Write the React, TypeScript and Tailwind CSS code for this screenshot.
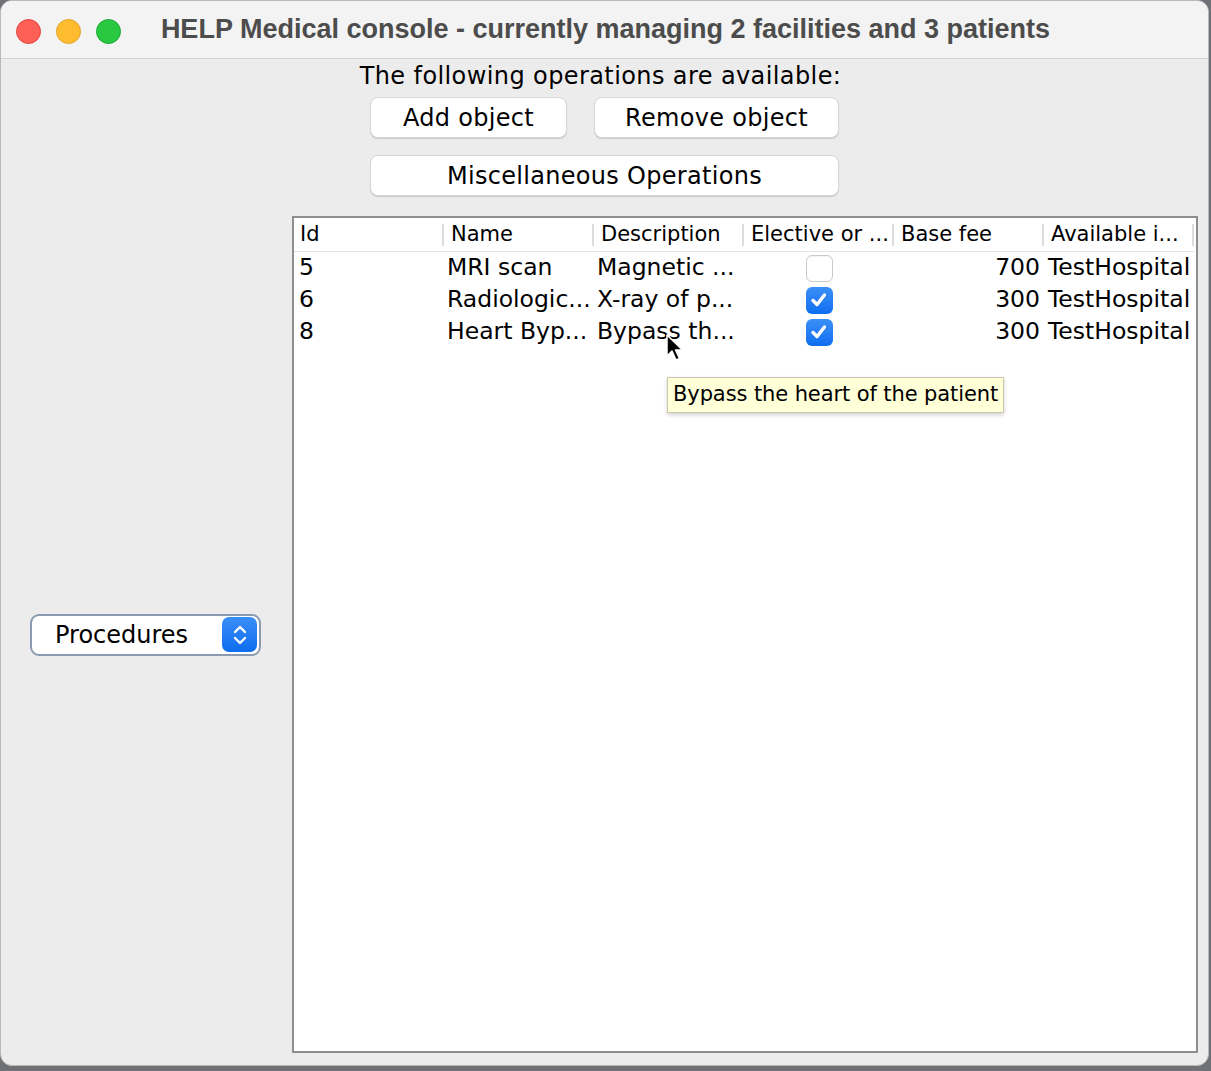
import { useState } from 'react';

type Row = { id: number; name: string; desc: string; elective: boolean; fee: number; place: string };

const rows: Row[] = [
  { id: 5, name: 'MRI scan', desc: 'Magnetic ...', elective: false, fee: 700, place: 'TestHospital' },
  { id: 6, name: 'Radiologic...', desc: 'X-ray of p...', elective: true, fee: 300, place: 'TestHospital' },
  { id: 8, name: 'Heart Byp...', desc: 'Bypass th...', elective: true, fee: 300, place: 'TestHospital' },
];

const columns = ['Id', 'Name', 'Description', 'Elective or ...', 'Base fee', 'Available i...'];

function CheckBox({ checked }: { checked: boolean }) {
  if (!checked) {
    return <div className="w-[27px] h-[27px] rounded-[6px] border border-[#c9c9c9] bg-white shadow-[inset_0_1px_1px_rgba(0,0,0,0.05)]" />;
  }
  return (
    <div className="w-[27px] h-[27px] rounded-[6px] bg-gradient-to-b from-[#3b8ff7] to-[#0c6ef0] flex items-center justify-center">
      <svg width="20" height="20" viewBox="0 0 20 20">
        <path d="M4 10.5 L8 14.5 L15.5 5" fill="none" stroke="white" strokeWidth="3.4" strokeLinecap="round" strokeLinejoin="round" />
      </svg>
    </div>
  );
}

function MacButton({ label, className }: { label: string; className: string }) {
  return (
    <button className={`h-[41px] rounded-[8px] bg-white border border-[#d6d6d6] shadow-[0_1px_1px_rgba(0,0,0,0.15)] text-[24px] tracking-[0.3px] text-black ${className}`}>
      {label}
    </button>
  );
}

export default function App() {
  const [kind] = useState('Procedures');

  return (
    <div className="w-[1211px] h-[1071px] bg-[#6f7176] font-['DejaVu_Sans',sans-serif]">
      <div className="relative w-[1209px] h-[1066px] rounded-[12px] overflow-hidden border border-[#b9b9b9] bg-[#ececec] flex flex-col">
        {/* title bar */}
        <div className="relative h-[58px] shrink-0 bg-[#f3f3f3] border-b border-[#d2d2d2] flex items-center justify-center">
          <div className="absolute left-[15px] top-[18px] flex gap-[15px]">
            <span className="w-[25px] h-[25px] rounded-full bg-[#fe5f57] border border-[#e2463f]" />
            <span className="w-[25px] h-[25px] rounded-full bg-[#febc2e] border border-[#e0a028]" />
            <span className="w-[25px] h-[25px] rounded-full bg-[#28c840] border border-[#1fa833]" />
          </div>
          <span className="font-['Liberation_Sans',sans-serif] font-bold text-[27px] text-[#4c4c4c] pl-[2px]">
            HELP Medical console - currently managing 2 facilities and 3 patients
          </span>
        </div>

        {/* operations */}
        <div className="flex flex-col items-center pt-[1px]">
          <div className="text-[24px] tracking-[0.4px] text-black leading-[32px] -ml-[8px]">The following operations are available:</div>
          <div className="flex gap-[27px] mt-[5px]">
            <MacButton label="Add object" className="w-[197px]" />
            <MacButton label="Remove object" className="w-[245px]" />
          </div>
          <MacButton label="Miscellaneous Operations" className="w-[469px] mt-[17px]" />
        </div>

        {/* main area */}
        <div className="flex flex-1 mt-[20px] pb-[12px] pr-[10px]">
          <div className="w-[291px] shrink-0 flex items-center pl-[29px]">
            <div className="w-[231px] h-[42px] rounded-[9px] border-2 border-[#8b9ab0] bg-white flex items-center justify-between pl-[23px] pr-[2px]">
              <span className="text-[24px] text-black">{kind}</span>
              <div className="w-[35px] h-[35px] rounded-[7px] bg-gradient-to-b from-[#3a8ef7] to-[#0a6cf0] flex items-center justify-center">
                <svg width="18" height="26" viewBox="0 0 18 26">
                  <path d="M4 10 L9 5 L14 10" fill="none" stroke="white" strokeWidth="2.4" strokeLinecap="round" strokeLinejoin="round" />
                  <path d="M4 16 L9 21 L14 16" fill="none" stroke="white" strokeWidth="2.4" strokeLinecap="round" strokeLinejoin="round" />
                </svg>
              </div>
            </div>
          </div>

          <div className="relative flex-1 border-2 border-[#8e8e8e] bg-white">
            <div className="flex h-[34px] border-b border-[#e3e3e3] w-[900px]">
              {columns.map((c, i) => (
                <div key={c} className="w-[150px] flex items-center justify-between overflow-hidden">
                  <span className={`text-[21px] text-black whitespace-nowrap ${i === 0 ? 'pl-[6px]' : 'pl-[7px]'}`}>{c}</span>
                  <span className="w-[2px] h-[22px] shrink-0 bg-[#dcdcdc]" />
                </div>
              ))}
            </div>
            {rows.map(r => (
              <div key={r.id} className="flex h-[32px] items-center text-[23.5px] text-black w-[900px]">
                <div className="w-[150px] pl-[5px]">{r.id}</div>
                <div className="w-[150px] pl-[3px] whitespace-nowrap">{r.name}</div>
                <div className="w-[150px] pl-[3px] whitespace-nowrap">{r.desc}</div>
                <div className="w-[150px] flex justify-center">
                  <CheckBox checked={r.elective} />
                </div>
                <div className="w-[150px] text-right pr-[4px]">{r.fee}</div>
                <div className="w-[150px] pl-[4px] whitespace-nowrap">{r.place}</div>
              </div>
            ))}

            {/* cursor */}
            <svg className="absolute left-[371px] top-[115px]" width="22" height="30" viewBox="0 0 22 30">
              <path d="M2 2 L2 23 L7 18 L11 27 L14.5 25.5 L10.5 17 L17.5 17 Z" fill="black" stroke="white" strokeWidth="1.5" strokeLinejoin="round" />
            </svg>

            {/* tooltip */}
            <div className="absolute left-[373px] top-[159px] h-[36px] px-[5px] flex items-center bg-[#ffffd8] border border-[#c8c8b0] shadow-[0_2px_4px_rgba(0,0,0,0.18)] text-[21px] tracking-[-0.1px] text-black whitespace-nowrap">
              Bypass the heart of the patient
            </div>
          </div>
        </div>
      </div>
    </div>
  );
}
